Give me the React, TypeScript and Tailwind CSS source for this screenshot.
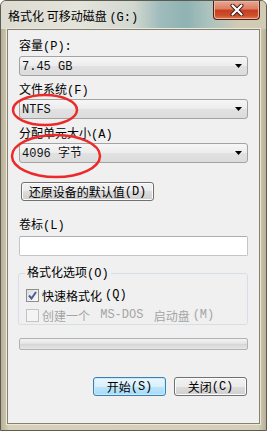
import type { ReactNode } from 'react'

/* ASCII runs get the mono face, the rest stays CJK */
function Mx({ s }: { s: string }) {
  const parts = s.split(/([\x20-\x7e]+)/)
  return (
    <>
      {parts.map((p, i) =>
        /^[\x20-\x7e]+$/.test(p) ? (
          <span key={i} className="font-['Liberation_Mono',monospace] text-[12px] whitespace-pre">
            {p}
          </span>
        ) : (
          <span key={i}>{p}</span>
        ),
      )}
    </>
  )
}

function Label({ text, className = '' }: { text: string; className?: string }) {
  return (
    <div className={`h-[12px] leading-[12px] text-[12px] text-black ${className}`}>
      <Mx s={text} />
    </div>
  )
}

function Combo({ value, className = '' }: { value: string; className?: string }) {
  return (
    <div
      className={`flex h-[20px] items-center justify-between rounded-[3px] border border-[#a3a3a3] bg-[linear-gradient(#f6f6f6,#ececec_50%,#e1e1e1_50%,#dcdcdc)] pl-[2px] pr-[4px] text-[12px] leading-[12px] ${className}`}
    >
      <span className="text-[#111]">
        <Mx s={value} />
      </span>
      <svg width="8" height="5" viewBox="0 0 8 5">
        <path d="M0 0 H7 L3.5 4 Z" fill="#000" />
      </svg>
    </div>
  )
}

function Btn({ children, primary = false, className = '' }: { children: ReactNode; primary?: boolean; className?: string }) {
  return (
    <div
      className={`flex h-[19px] items-center justify-center rounded-[3px] border text-[12px] leading-[12px] ${
        primary
          ? 'border-[#3c7fb1] bg-[linear-gradient(#eaf6fd,#d9f0fc_50%,#bee6fd_50%,#a7d9f5)] shadow-[inset_0_0_0_1px_#c8ebfb]'
          : 'border-[#707070] bg-[linear-gradient(#f2f2f2,#ebebeb_50%,#dddddd_50%,#cfcfcf)] shadow-[inset_0_0_0_1px_#fcfcfc]'
      } ${className}`}
    >
      {children}
    </div>
  )
}

export default function App() {
  return (
    <div className="relative h-[431px] w-[267px] overflow-hidden rounded-t-[6px] border border-[#5d5a4f] bg-[linear-gradient(90deg,#b7af96,#d8d1ba_3%,#d6cfb8_97%,#b7af96)] font-['Noto_Sans_CJK_SC',sans-serif]">
      {/* TITLE BAR */}
      <div className="flex h-[28px] items-start justify-between bg-[linear-gradient(90deg,#dcdcd2_0%,#e4e4dc_30%,#d2d8d0_50%,#9fbcbc_60%,#8fb2b3_70%,#aac2be_78%,#d2cbb3_90%)]">
        <div className="pl-[7px] pt-[9px] text-[12px] leading-[12px] text-black">
          格式化 可移动磁盘 <Mx s="(G:)" />
        </div>
        <div className="mr-[6px] flex h-[19px] w-[47px] items-center justify-center rounded-b-[4px] border border-t-0 border-[#4b2219] bg-[linear-gradient(#eba592,#dc7d62_45%,#c63d1f_50%,#cc4f2b_80%,#e37a48)] shadow-[inset_0_0_0_1px_#f0b4a0]">
          <svg width="14" height="12" viewBox="0 0 14 12">
            <path d="M2.5 1.5 L11.5 10.5 M11.5 1.5 L2.5 10.5" stroke="#3b1a14" strokeWidth="4" strokeLinecap="round" />
            <path d="M2.5 1.5 L11.5 10.5 M11.5 1.5 L2.5 10.5" stroke="#fff" strokeWidth="2.2" strokeLinecap="round" />
          </svg>
        </div>
      </div>

      {/* CLIENT */}
      <div className="ml-[6px] h-[395px] w-[253px] border border-[#858272] bg-[#f0f0f0] px-[11px] shadow-[0_0_0_1px_#ebe7d9]">
        <Label text="容量(P):" className="mt-[9px]" />
        <Combo value="7.45 GB" className="mt-[5px]" />

        <Label text="文件系统(F)" className="mt-[7px]" />
        <Combo value="NTFS" className="mt-[4px]" />

        <Label text="分配单元大小(A)" className="mt-[8px]" />
        <Combo value="4096 字节" className="mt-[4px]" />

        <Btn className="mt-[19px] w-[133px] ml-[2px]">
          <Mx s="还原设备的默认值(D)" />
        </Btn>

        <Label text="卷标(L)" className="mt-[17px]" />
        <div className="mt-[6px] h-[20px] rounded-[2px] border border-[#c5c5c5] border-t-[#abadb3] bg-white" />

        {/* FORMAT OPTIONS */}
        <fieldset className="mt-[10px] -ml-[1px] h-[59px] rounded-[3px] border border-[#d5dfe5] px-[7px]">
          <legend className="-ml-[1px] px-[2px] text-[12px] leading-[12px]">
            <Mx s="格式化选项(O)" />
          </legend>
          <div className="mt-[9px] flex items-center gap-[3px] text-[12px] leading-[13px]">
            <div className="flex h-[13px] w-[13px] items-center justify-center border border-[#8f8f8f] bg-[linear-gradient(135deg,#dcdcdc,#fbfbfb)]">
              <svg width="9" height="9" viewBox="0 0 9 9">
                <path d="M1 4.5 L3.5 7.5 L8 1" stroke="#4a5f97" strokeWidth="2" fill="none" />
              </svg>
            </div>
            <Mx s="快速格式化(Q)" />
          </div>
          <div className="mt-[7px] flex items-center gap-[3px] text-[12px] leading-[13px] text-[#a5a5a5]">
            <div className="h-[13px] w-[13px] border border-[#c4c4c4] bg-[#f4f4f4]" />
            <Mx s="创建一个 MS-DOS 启动盘(M)" />
          </div>
        </fieldset>

        {/* PROGRESS */}
        <div className="mt-[13px] h-[12px] rounded-[2px] border border-[#b2b2b2] bg-[linear-gradient(#f3f3f3,#e4e4e4_45%,#d6d6d6_55%,#e6e6e6)]" />

        {/* ACTIONS */}
        <div className="mt-[27px] flex justify-end gap-[8px] pr-[1px]">
          <Btn primary className="w-[73px]">
            <Mx s="开始(S)" />
          </Btn>
          <Btn className="w-[73px]">
            <Mx s="关闭(C)" />
          </Btn>
        </div>
      </div>

      {/* red annotation marks drawn over the shot */}
      <svg className="pointer-events-none absolute left-0 top-0" width="267" height="431">
        <ellipse cx="44" cy="109" rx="32" ry="15" fill="none" stroke="#ec2a2a" strokeWidth="2.5" />
        <ellipse cx="55" cy="155" rx="44" ry="21" fill="none" stroke="#ec2a2a" strokeWidth="2.5" />
      </svg>
    </div>
  )
}
